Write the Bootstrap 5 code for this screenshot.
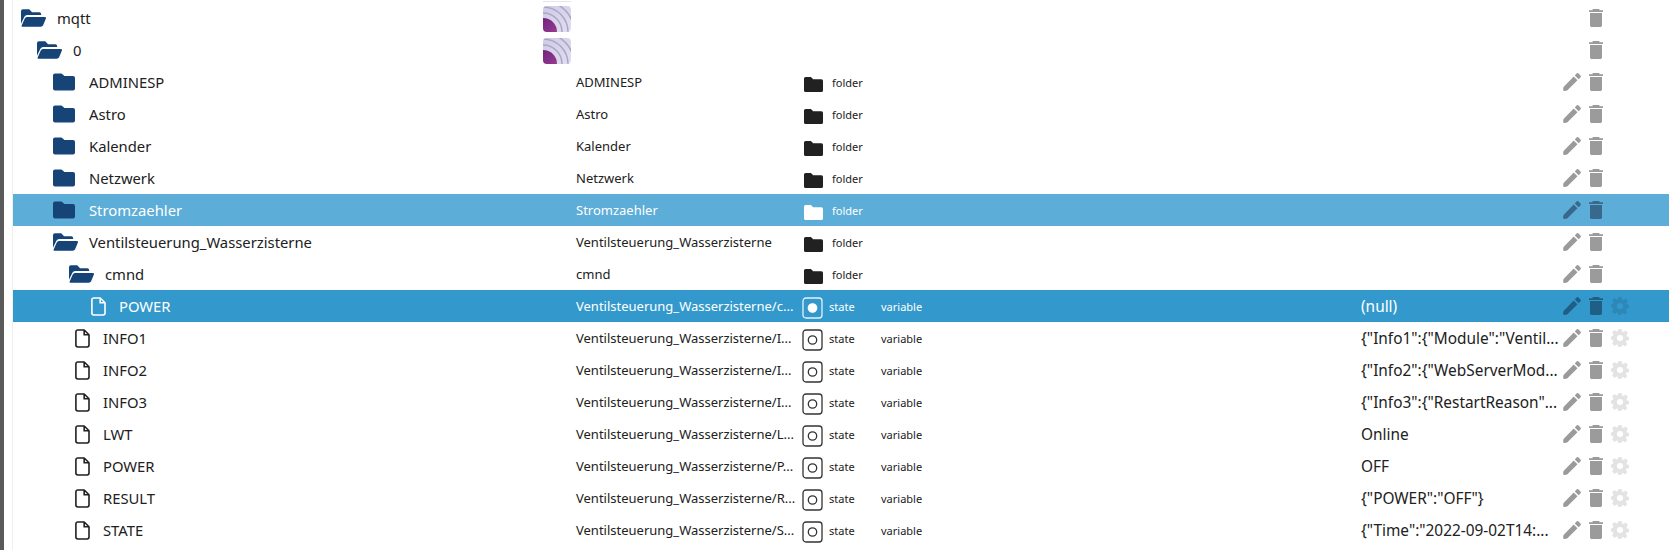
<!DOCTYPE html>
<html lang="de">
<head>
    <meta charset="UTF-8">
    <title>mqtt objects</title>
    <link href="https://cdn.jsdelivr.net/npm/bootstrap@5.3.0/dist/css/bootstrap.min.css" rel="stylesheet">
    <style>
        html, body { height: 100%; overflow: hidden; }
        body {
            font-family: "Noto Sans", Verdana, sans-serif;
            color: #212121;
            background: #fff;
            border-left: 4px solid #5a5a5a;
        }
        .tree-wrap { padding: 0 0 0 8px; }
        .tree-body { border-left: 1px solid #efefef; padding-top: 1px; min-height: 550px; }
        .logo-stub { height: 1px; width: 28px; margin-left: 530px; background: #e6e4ee; }
        .tree-row { height: 32px; font-size: 14.8px; white-space: nowrap; }
        .tree-row.sel-light { background: #5cadd8; color: #fff; }
        .tree-row.sel-dark { background: #3399cc; color: #fff; }
        .cell-name { width: 563px; flex: none; }
        .ico-closed { width: 24px; height: 20px; fill: #164477; flex: none; margin-right: 12px; }
        .ico-open { width: 25px; height: 20px; fill: #164477; flex: none; margin-right: 11px; }
        .ico-file { width: 15px; height: 19px; flex: none; margin-right: 13px; }
        .lvl-0 { padding-left: 8px; }
        .lvl-1 { padding-left: 24px; }
        .lvl-2 { padding-left: 40px; }
        .lvl-3 { padding-left: 56px; }
        .lvl-4 { padding-left: 62px; }
        .lvl-5 { padding-left: 78px; }
        .logo-box { display: block; width: 28px; height: 26px; margin-left: -33px; }
        .cell-id { width: 228px; flex: none; font-size: 13px; padding-top: 2px; }
        .cell-type { width: 77px; flex: none; font-size: 11px; }
        .cell-type span { padding-top: 2px; }
        .cell-role { width: 480px; flex: none; font-size: 11px; padding-top: 2px; }
        .cell-value { width: 202px; flex: none; font-size: 15.4px; overflow: hidden; padding-top: 2px; }
        .ico-type-folder { width: 19px; height: 15px; fill: #212121; flex: none; margin: 4px 9px 0 0; }
        .sel-light .ico-type-folder { fill: #fff; }
        .state-box { width: 21px; height: 22px; stroke: #333; fill: none; flex: none; margin: 4px 6px 0 -2px; }
        .sel-dark .state-box { stroke: #e4f2f9; }
        .sel-dark .state-box circle { fill: #fff; stroke: #fff; }
        .cell-actions { gap: 8px; flex: none; }
        .act-pencil { width: 18px; height: 18px; fill: #9b9b9b; flex: none; }
        .act-trash { width: 14px; height: 18px; fill: #9b9b9b; flex: none; }
        .act-gear { width: 18px; height: 18px; fill: #e3e3e3; flex: none; }
        .sel-light .act-pencil, .sel-light .act-trash { fill: #38688c; }
        .sel-dark .act-pencil, .sel-dark .act-trash { fill: #1f5f85; }
        .sel-dark .act-gear { fill: #2d88b8; }
    </style>
</head>
<body>
    <svg width="0" height="0" class="position-absolute">
        <defs>
            <linearGradient id="mqtt-bg" x1="0" y1="0" x2="1" y2="1"><stop offset="0" stop-color="#cfcbe3"/><stop offset="1" stop-color="#e2dfef"/></linearGradient>
            <linearGradient id="mqtt-disc" x1="0" y1="0" x2="1" y2="1"><stop offset="0" stop-color="#5f1670"/><stop offset="1" stop-color="#a8489f"/></linearGradient>
            <clipPath id="mqtt-clip"><rect width="28" height="26" rx="4"/></clipPath>
        </defs>
        <symbol id="folder-closed" viewBox="0 0 24 20"><path d="M2 1.500h6.500l3 2.500H20a2 2 0 0 1 2 2v10.500a2 2 0 0 1-2 2H2a2 2 0 0 1-2-2v-13a2 2 0 0 1 2-2z"/></symbol>
        <symbol id="folder-open" viewBox="0 0 26 20"><path d="M0 16V3a2 2 0 0 1 2-2h6.500l3 3H19a2 2 0 0 1 2 2v1H6.500a3.500 3.500 0 0 0-3 1.800z"/><path d="M6.800 9H25c.8 0 1.200.7.900 1.400L23 17.500a3.600 3.600 0 0 1-3 1.700H1.600c-.8 0-1.200-.8-.9-1.400l3.200-7.300A3.400 3.400 0 0 1 6.800 9z"/></symbol>
        <symbol id="file" viewBox="0 0 15 19"><path fill="none" stroke="currentColor" stroke-width="1.600" stroke-linejoin="round" d="M2.800 1h6.400L14 5.800v10.300a1.900 1.900 0 0 1-1.900 1.900H2.800a1.900 1.900 0 0 1-1.900-1.900V2.900A1.900 1.900 0 0 1 2.800 1z"/><path fill="none" stroke="currentColor" stroke-width="1.600" d="M9.200 1v4.800H14"/></symbol>
        <symbol id="pencil" viewBox="0 0 18 18"><path d="M13.600.6a1.400 1.400 0 0 1 2 0l1.800 1.800a1.400 1.400 0 0 1 0 2l-1.800 1.800-3.800-3.800zM10.700 3.500l3.800 3.800-9.800 9.800c-.9.900-3.300 1-4.400.7-.3-1.100-.2-3.500.7-4.400z"/></symbol>
        <symbol id="trash" viewBox="0 0 14 18"><path d="M3.500.6c0-.4.300-.6.600-.6h5.800c.3 0 .6.200.6.600v.7H14V3H0V1.300h3.500zM1 4h12v12.200c0 1-.8 1.800-1.800 1.800H2.800c-1 0-1.800-.8-1.800-1.800z"/></symbol>
        <symbol id="gear" viewBox="0 0 20 20"><path fill-rule="evenodd" d="M8.200 0h3.600l.5 2.700 1.600.7 2.300-1.600 2.600 2.600-1.600 2.300.7 1.600 2.100.5v3.600l-2.700.5-.7 1.600 1.600 2.300-2.600 2.600-2.300-1.600-1.600.7-.5 2.100H8.200l-.5-2.700-1.600-.7-2.300 1.600-2.600-2.600 1.600-2.300-.7-1.600L0 11.800V8.200l2.100-.5.700-1.600-1.600-2.300 2.600-2.600 2.300 1.600 1.600-.7zM10 6.600a3.400 3.400 0 1 0 0 6.800 3.400 3.400 0 0 0 0-6.800z"/></symbol>
        <symbol id="type-folder" viewBox="0 0 19 15"><path d="M1.600 0h5.300l2.300 2.300h8.200A1.600 1.600 0 0 1 19 3.900v9.500a1.600 1.600 0 0 1-1.600 1.600H1.600A1.600 1.600 0 0 1 0 13.400V1.600A1.600 1.600 0 0 1 1.600 0z"/></symbol>
        <symbol id="mqtt-logo" viewBox="0 0 28 26">
            <g clip-path="url(#mqtt-clip)">
                <rect width="28" height="26" fill="url(#mqtt-bg)"/>
                <g fill="none" stroke="#aaa5cc">
                    <circle cx="0" cy="26" r="19" stroke-width="1.500"/>
                    <circle cx="0" cy="26" r="25" stroke-width="1.500"/>
                    <circle cx="0" cy="26" r="31" stroke-width="1.500"/>
                </g>
                <circle cx="0" cy="26" r="14" fill="url(#mqtt-disc)"/>
            </g>
        </symbol>
    </svg>

    <div class="tree-wrap"><div class="tree-body"><div class="logo-stub"></div><div id="tree"></div></div></div>

    <script>
        const base = 'Ventilsteuerung_Wasserzisterne/';
        const rows = [
            { name: 'mqtt', lvl: 0, icon: 'open', logo: true, noEdit: true },
            { name: '0', lvl: 1, icon: 'open', logo: true, noEdit: true },
            { name: 'ADMINESP', lvl: 2, icon: 'closed', id: 'ADMINESP', folder: true },
            { name: 'Astro', lvl: 2, icon: 'closed', id: 'Astro', folder: true },
            { name: 'Kalender', lvl: 2, icon: 'closed', id: 'Kalender', folder: true },
            { name: 'Netzwerk', lvl: 2, icon: 'closed', id: 'Netzwerk', folder: true },
            { name: 'Stromzaehler', lvl: 2, icon: 'closed', id: 'Stromzaehler', folder: true, sel: 'sel-light' },
            { name: 'Ventilsteuerung_Wasserzisterne', lvl: 2, icon: 'open', id: 'Ventilsteuerung_Wasserzisterne', folder: true },
            { name: 'cmnd', lvl: 3, icon: 'open', id: 'cmnd', folder: true },
            { name: 'POWER', lvl: 5, icon: 'file', id: base + 'c...', value: '(null)', sel: 'sel-dark' },
            { name: 'INFO1', lvl: 4, icon: 'file', id: base + 'I...', value: '{"Info1":{"Module":"Ventil...' },
            { name: 'INFO2', lvl: 4, icon: 'file', id: base + 'I...', value: '{"Info2":{"WebServerMod...' },
            { name: 'INFO3', lvl: 4, icon: 'file', id: base + 'I...', value: '{"Info3":{"RestartReason"...' },
            { name: 'LWT', lvl: 4, icon: 'file', id: base + 'L...', value: 'Online' },
            { name: 'POWER', lvl: 4, icon: 'file', id: base + 'P...', value: 'OFF' },
            { name: 'RESULT', lvl: 4, icon: 'file', id: base + 'R...', value: '{"POWER":"OFF"}' },
            { name: 'STATE', lvl: 4, icon: 'file', id: base + 'S...', value: '{"Time":"2022-09-02T14:...' }
        ];

        function use(id, cls) {
            return `<svg class="${cls}"><use href="#${id}"/></svg>`;
        }

        const icons = {
            open: use('folder-open', 'ico-open'),
            closed: use('folder-closed', 'ico-closed'),
            file: use('file', 'ico-file')
        };
        const stateBox = `<svg class="state-box" viewBox="0 0 21 22"><rect x="1" y="1" width="19" height="20" rx="3" stroke-width="1.300"/><circle cx="10.500" cy="11" r="4.200" stroke-width="1.300"/></svg>`;

        let html = '';
        for (const r of rows) {
            const isState = r.icon === 'file';
            let typeCell = '<div class="cell-type"></div><div class="cell-role"></div>';
            if (isState) {
                typeCell = `<div class="cell-type d-flex align-items-center">${stateBox}<span>state</span></div><div class="cell-role">variable</div>`;
            } else if (r.folder) {
                typeCell = `<div class="cell-type d-flex align-items-center">${use('type-folder', 'ico-type-folder')}<span>folder</span></div><div class="cell-role"></div>`;
            }

            html += `<div class="tree-row d-flex align-items-center ${r.sel || ''}">
                <div class="cell-name d-flex align-items-center lvl-${r.lvl}">${icons[r.icon]}<span>${r.name}</span></div>
                <div class="cell-id">${r.id || (r.logo ? use('mqtt-logo', 'logo-box') : '')}</div>
                ${typeCell}
                <div class="cell-value">${r.value || ''}</div>
                <div class="cell-actions d-flex align-items-center">
                    ${r.noEdit ? '<span class="act-pencil"></span>' : use('pencil', 'act-pencil')}
                    ${use('trash', 'act-trash')}
                    ${isState ? use('gear', 'act-gear') : ''}
                </div>
            </div>`;
        }
        document.getElementById('tree').innerHTML = html;
    </script>
    <script src="https://cdn.jsdelivr.net/npm/bootstrap@5.3.0/dist/js/bootstrap.bundle.min.js"></script>
</body>
</html>
